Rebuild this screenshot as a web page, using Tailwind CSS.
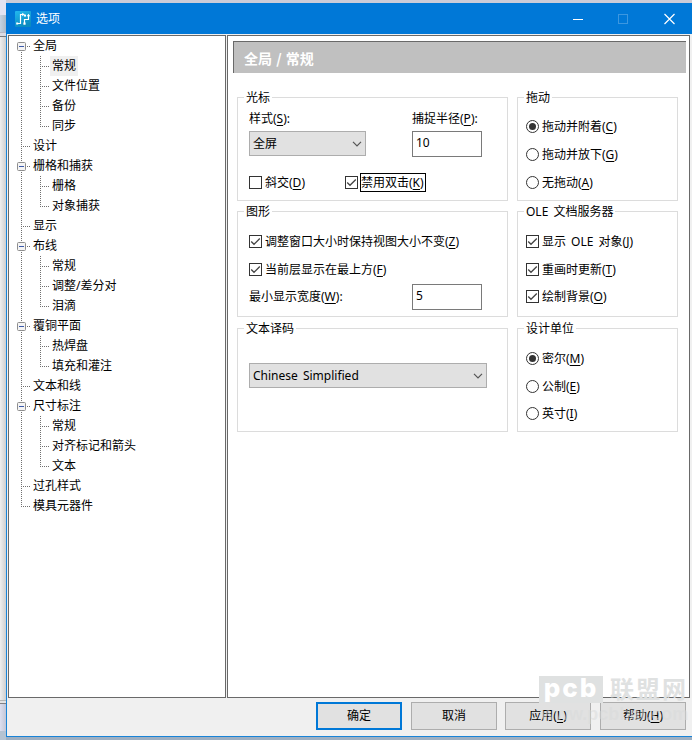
<!DOCTYPE html>
<html lang="zh-CN">
<head>
<meta charset="utf-8">
<title>选项</title>
<script src="https://cdn.jsdelivr.net/npm/@tailwindcss/browser@4"></script>
</head>
<body class="relative flex h-[740px] w-[692px] overflow-hidden bg-[#9dafc2] font-['Noto_Sans','Noto_Sans_CJK_SC',sans-serif] text-[12px] leading-4 text-black">
<!-- windows behind the dialog -->
<div class="flex h-[740px] w-[6px] shrink-0 flex-col">
  <div class="h-[15px] bg-[#e2e3f1]"></div>
  <div class="h-[17px] bg-linear-to-r from-[#c5d3e2] to-[#adbac7]"></div>
  <div class="h-px bg-[#b8b8c4]"></div>
  <div class="h-[3px] bg-[#dcdce4]"></div>
  <div class="h-px shrink-0 bg-[#77777a]"></div>
  <div class="flex-1 bg-linear-to-r from-[#efefef] to-[#cfcfcf]"></div>
  <div class="h-px bg-[#b5b5b5]"></div>
  <div class="h-[2px] bg-[#e4e4e4]"></div>
  <div class="h-px bg-[#808084]"></div>
  <div class="h-[27px] bg-linear-to-r from-[#dcdff0] to-[#c3c6d6]"></div>
  <div class="h-[9px] bg-[#b4c3d2]"></div>
</div>
<div class="flex h-[740px] w-[686px] flex-col">
  <div class="h-[3px] shrink-0 bg-[#cbccd8]"></div>
  <div class="flex h-[734px] shrink-0 flex-col border-b border-l border-[#1883d7] bg-[#f0f0f0]">
    <!-- title bar -->
    <div class="-ml-px flex h-[31px] shrink-0 items-center bg-[#0078d7] pl-[9px] text-white">
      <svg class="h-4 w-4" viewBox="0 0 16 16">
        <defs><linearGradient id="g" x1="0" y1="0" x2="0.4" y2="1"><stop offset="0" stop-color="#22b9f0"/><stop offset="1" stop-color="#0b8cc0"/></linearGradient></defs>
        <rect width="16" height="16" rx="1" fill="url(#g)"/>
        <path d="M2 12.500H5.500V3.500H8M9.500 12.500V8.500H13.500V4.500M9.500 4.500H10.500" fill="none" stroke="#fff" stroke-width="1.200"/>
        <path d="M7.200 1.800L9.800 3.500 7.200 5.200zM11.800 5.300L13.500 2.800 15.200 5.300zM8.400 11.500H10.600V13.700H8.400z" fill="#fff"/>
        <rect x="1.200" y="11.500" width="2" height="2" fill="#fff"/><rect x="9" y="3.600" width="2" height="2" fill="#fff"/>
      </svg>
      <span class="ml-[5px]">选项</span>
      <svg class="ml-auto mr-[17px] h-3 w-[102px]" viewBox="0 0 102 12" fill="none">
        <path d="M0 6.500H10" stroke="#fff"/>
        <rect x="45.500" y="1.500" width="9" height="9" stroke="#3c97e0"/>
        <path d="M91.500 1L101.500 11M101.500 1L91.500 11" stroke="#fff" stroke-width="1.200"/>
      </svg>
    </div>
    <!-- panels -->
    <div class="mt-px ml-px flex h-[663px] shrink-0 gap-px">
      <div id="tree" class="w-[218px] shrink-0 border border-[#696969] bg-white"></div>
      <div class="w-[463px] shrink-0 border border-[#696969] bg-white pt-[5px] pl-[5px]">
        <div class="flex h-[32px] w-[453px] items-center border-t border-l border-[#696969] bg-[#c0c0c0] pl-[10px] font-['Noto_Sans_CJK_SC',sans-serif] text-[14px] font-bold text-white [word-spacing:1px]">全局 / 常规</div>
        <div class="mt-[24px] ml-[4px] flex gap-[9px]">
          <!-- left column -->
          <div class="flex w-[271px] flex-col">
            <section class="relative h-[104px] border border-[#dcdcdc] pl-[11px]">
              <h2 class="absolute top-[-8px] left-[6px] bg-white px-[2px]">光标</h2>
              <div class="mt-[13px] flex h-4"><span class="w-[163px]">样式(<u class="underline-offset-2">S</u>):</span><span>捕捉半径(<u class="underline-offset-2">P</u>):</span></div>
              <div class="mt-[4px] flex h-[26px]">
                <div class="mr-[46px] flex h-[25px] w-[117px] items-center justify-between border border-[#adadad] bg-[#e1e1e1] pr-[3px] pl-[3px]"><span>全屏</span><svg class="h-[6px] w-[10px]" viewBox="0 0 10 6" fill="none"><path d="M1 0.800L5 4.800 9 0.800" stroke="#555" stroke-width="1.200"/></svg></div>
                <div class="h-[26px] w-[70px] border border-[#7a7a7a] pt-[3px] pl-[3px]">10</div>
              </div>
              <div class="mt-[16px] flex h-[19px] items-center">
                <i data-k="check"></i><span class="w-[83px] pl-[3px]">斜交(<u class="underline-offset-2">D</u>)</span>
                <i data-k="check" data-on></i><span class="ml-[2px] flex h-[19px] w-[66px] items-center border border-black whitespace-nowrap">禁用双击(<u class="underline-offset-2">K</u>)</span>
              </div>
            </section>
            <section class="relative mt-[10px] h-[106px] border border-[#dcdcdc] pl-[11px]">
              <h2 class="absolute top-[-8px] left-[6px] bg-white px-[2px]">图形</h2>
              <div class="mt-[22px] flex h-[15px] items-center gap-[3px]"><i data-k="check" data-on></i><span>调整窗口大小时保持视图大小不变(<u class="underline-offset-2">Z</u>)</span></div>
              <div class="mt-[13px] flex h-[15px] items-center gap-[3px]"><i data-k="check" data-on></i><span>当前层显示在最上方(<u class="underline-offset-2">F</u>)</span></div>
              <div class="mt-[7px] flex h-[26px] items-center"><span class="w-[163px]">最小显示宽度(<u class="underline-offset-2">W</u>):</span><div class="h-[26px] w-[70px] border border-[#7a7a7a] pt-[3px] pl-[3px]">5</div></div>
            </section>
            <section class="relative mt-[11px] h-[104px] border border-[#dcdcdc] pl-[11px]">
              <h2 class="absolute top-[-8px] left-[6px] bg-white px-[2px]">文本译码</h2>
              <div class="mt-[34px] flex h-[25px] w-[238px] items-center justify-between border border-[#adadad] bg-[#e1e1e1] pr-[3px] pl-[3px]"><span class="[word-spacing:2px]">Chinese Simplified</span><svg class="h-[6px] w-[10px]" viewBox="0 0 10 6" fill="none"><path d="M1 0.800L5 4.800 9 0.800" stroke="#555" stroke-width="1.200"/></svg></div>
            </section>
          </div>
          <!-- right column -->
          <div class="flex w-[161px] flex-col">
            <section class="relative flex h-[104px] flex-col gap-[13px] border border-[#dcdcdc] pt-[21px] pl-[8px]">
              <h2 class="absolute top-[-8px] left-[6px] bg-white px-[2px]">拖动</h2>
              <div class="flex h-[15px] items-center gap-[3px]"><i data-k="radio" data-on></i><span>拖动并附着(<u class="underline-offset-2">C</u>)</span></div>
              <div class="flex h-[15px] items-center gap-[3px]"><i data-k="radio"></i><span>拖动并放下(<u class="underline-offset-2">G</u>)</span></div>
              <div class="flex h-[15px] items-center gap-[3px]"><i data-k="radio"></i><span>无拖动(<u class="underline-offset-2">A</u>)</span></div>
            </section>
            <section class="relative mt-[10px] h-[106px] border border-[#dcdcdc] pt-[22px] pl-[8px]">
              <h2 class="absolute top-[-8px] left-[6px] bg-white px-[2px] [word-spacing:2px]">OLE 文档服务器</h2>
              <div class="flex h-[15px] items-center gap-[3px]"><i data-k="check" data-on></i><span class="[word-spacing:2px]">显示 OLE 对象(<u class="underline-offset-2">J</u>)</span></div>
              <div class="mt-[13px] flex h-[15px] items-center gap-[3px]"><i data-k="check" data-on></i><span>重画时更新(<u class="underline-offset-2">T</u>)</span></div>
              <div class="mt-[12px] flex h-[15px] items-center gap-[3px]"><i data-k="check" data-on></i><span>绘制背景(<u class="underline-offset-2">O</u>)</span></div>
            </section>
            <section class="relative mt-[11px] h-[104px] border border-[#dcdcdc] pt-[22px] pl-[8px]">
              <h2 class="absolute top-[-8px] left-[6px] bg-white px-[2px]">设计单位</h2>
              <div class="flex h-[15px] items-center gap-[3px]"><i data-k="radio" data-on></i><span>密尔(<u class="underline-offset-2">M</u>)</span></div>
              <div class="mt-[13px] flex h-[15px] items-center gap-[3px]"><i data-k="radio"></i><span>公制(<u class="underline-offset-2">E</u>)</span></div>
              <div class="mt-[12px] flex h-[15px] items-center gap-[3px]"><i data-k="radio"></i><span>英寸(<u class="underline-offset-2">I</u>)</span></div>
            </section>
          </div>
        </div>
      </div>
    </div>
    <!-- buttons -->
    <div class="mt-[4px] ml-[309px] flex h-[28px] shrink-0">
      <div class="flex w-[86px] items-center justify-center border-2 border-[#0078d7] bg-[#e1e1e1]">确定</div>
      <div class="ml-[9px] flex w-[86px] items-center justify-center border border-[#adadad] bg-[#e1e1e1]">取消</div>
      <div class="ml-[8px] flex w-[86px] items-center justify-center border border-[#adadad] bg-[#e1e1e1]"><span>应用(<u class="underline-offset-2">L</u>)</span></div>
      <div class="ml-[9px] flex w-[86px] items-center justify-center border border-[#adadad] bg-[#e1e1e1]"><span>帮助(<u class="underline-offset-2">H</u>)</span></div>
    </div>
  </div>
</div>
<!-- watermark -->
<div class="absolute top-[676px] left-[539px] flex h-[27px] items-start gap-[7px] text-[#dfe1e1]">
  <div class="flex h-[27px] w-[64px] items-center justify-center bg-[#dfe1e1] pb-[3px] font-['Inter',sans-serif] text-[26px] leading-[24px] font-extrabold tracking-[2px] text-white">pcb</div>
  <div class="font-['Noto_Sans_CJK_SC',sans-serif] text-[24px] leading-[24px] font-bold tracking-[2px] whitespace-nowrap">联盟网</div>
</div>
<div class="absolute top-[704px] left-[541px] font-['Liberation_Sans',sans-serif] text-[18px] leading-[20px] font-bold text-[#d8dada]/50">www.pcbbar.com</div>
<script>
// [level, label, expandable, last sibling, selected]
const items = [
  [0,'全局',1],[1,'常规',0,0,1],[1,'文件位置'],[1,'备份'],[1,'同步',0,1],
  [0,'设计'],[0,'栅格和捕获',1],[1,'栅格'],[1,'对象捕获',0,1],[0,'显示'],
  [0,'布线',1],[1,'常规'],[1,'调整/差分对'],[1,'泪滴',0,1],
  [0,'覆铜平面',1],[1,'热焊盘'],[1,'填充和灌注',0,1],[0,'文本和线'],
  [0,'尺寸标注',1],[1,'常规'],[1,'对齐标记和箭头'],[1,'文本',0,1],
  [0,'过孔样式'],[0,'模具元器件',0,1]
];
document.getElementById('tree').innerHTML = items.map(([lv, label, open, last, sel], i) => {
  const w = lv ? 41 : 22;
  let d = '';
  const y0 = i === 0 ? 10 : 0;
  const y1 = (lv === 0 && last) ? 11 : 20;
  d += `M12.500 ${y0}V${y1}`;
  d += lv ? `M31.500 0V${last ? 11 : 20}M33 10.500H41` : 'M14 10.500H22';
  const box = open ? '<rect x="8.500" y="6.500" width="8" height="8" rx="1" fill="#f4f4f4" stroke="#8e8e8e"/><path d="M10 10.500H15" stroke="#3c5aaa"/>' : '';
  return `<div class="flex h-5 items-center"><svg class="shrink-0" width="${w}" height="20" fill="none"><path d="${d}" stroke="#707070" stroke-dasharray="1 1"/>${box}</svg><span class="flex h-5 items-center px-[2px] ${sel ? 'bg-[#f0f0f0]' : ''}">${label}</span></div>`;
}).join('');

document.querySelectorAll('i[data-k]').forEach(el => {
  const on = el.hasAttribute('data-on');
  el.outerHTML = el.dataset.k === 'check'
    ? `<svg class="h-[13px] w-[13px] shrink-0" viewBox="0 0 13 13" fill="none"><rect x="0.500" y="0.500" width="12" height="12" fill="#fff" stroke="#333"/>${on ? '<path d="M2.200 6.500L5 9.300 10.800 3.500" stroke="#444" stroke-width="1.300"/>' : ''}</svg>`
    : `<svg class="h-[13px] w-[13px] shrink-0" viewBox="0 0 13 13" fill="none"><circle cx="6.500" cy="6.500" r="6" fill="#fff" stroke="#333"/>${on ? '<circle cx="6.500" cy="6.500" r="3.500" fill="#333"/>' : ''}</svg>`;
});
</script>
</body>
</html>
